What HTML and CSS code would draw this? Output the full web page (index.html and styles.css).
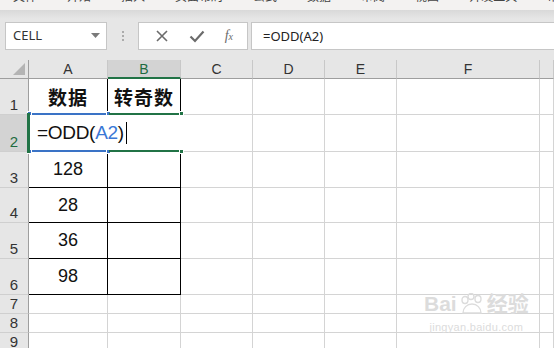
FILE: index.html
```html
<!DOCTYPE html>
<html lang="zh-CN">
<head>
    <meta charset="UTF-8">
    <title>ODD</title>
    <link rel="stylesheet" href="styles.css">
</head>
<body>
    <div class="menu">
        <span>文件</span><span>开始</span><span>插入</span><span>页面布局</span><span>公式</span>
        <span>数据</span><span>审阅</span><span>视图</span><span>开发工具</span><span>帮助</span>
    </div>

    <div class="toolbar">
        <div class="namebox">
            <span>CELL</span>
            <svg width="9" height="5" viewBox="0 0 9 5"><path d="M0 0h9L4.5 5z" fill="#7a7a7a"/></svg>
        </div>
        <div class="grip"><i></i><i></i><i></i></div>
        <div class="fbtns">
            <svg width="14" height="14" viewBox="0 0 14 14"><path d="M2 2l10 10M12 2L2 12" stroke="#6b6b6b" stroke-width="1.6"/></svg>
            <svg width="16" height="14" viewBox="0 0 16 14"><path d="M1.5 7.5l4.5 4.5L14.5 2.5" stroke="#6b6b6b" stroke-width="2.2" fill="none"/></svg>
            <span class="fx">f<small>x</small></span>
        </div>
        <div class="formula">=ODD(A2)</div>
    </div>

    <div class="sheet">
        <!-- header row -->
        <div class="corner"><svg width="12" height="12" viewBox="0 0 12 12"><path d="M12 0v12H0z" fill="#b4b4b4"/></svg></div>
        <div class="colhead">A</div>
        <div class="colhead active">B</div>
        <div class="colhead">C</div>
        <div class="colhead">D</div>
        <div class="colhead">E</div>
        <div class="colhead">F</div>
        <div class="colhead last"></div>

        <!-- row 1 -->
        <div class="rowhead">1</div>
        <div class="cell t bold">数据</div>
        <div class="cell t bold">转奇数</div>
        <div class="cell"></div><div class="cell"></div><div class="cell"></div><div class="cell"></div><div class="cell"></div>

        <!-- row 2 -->
        <div class="rowhead active">2</div>
        <div class="cell edit">=ODD(<span class="ref">A2</span>)<span class="caret"></span></div>
        <div class="cell"></div><div class="cell"></div><div class="cell"></div><div class="cell"></div><div class="cell"></div>

        <!-- row 3 -->
        <div class="rowhead">3</div>
        <div class="cell t">128</div>
        <div class="cell t"></div>
        <div class="cell"></div><div class="cell"></div><div class="cell"></div><div class="cell"></div><div class="cell"></div>

        <!-- row 4 -->
        <div class="rowhead">4</div>
        <div class="cell t">28</div>
        <div class="cell t"></div>
        <div class="cell"></div><div class="cell"></div><div class="cell"></div><div class="cell"></div><div class="cell"></div>

        <!-- row 5 -->
        <div class="rowhead">5</div>
        <div class="cell t">36</div>
        <div class="cell t"></div>
        <div class="cell"></div><div class="cell"></div><div class="cell"></div><div class="cell"></div><div class="cell"></div>

        <!-- row 6 -->
        <div class="rowhead">6</div>
        <div class="cell t">98</div>
        <div class="cell t"></div>
        <div class="cell"></div><div class="cell"></div><div class="cell"></div><div class="cell"></div><div class="cell"></div>

        <!-- rows 7-9 -->
        <div class="rowhead">7</div>
        <div class="cell"></div><div class="cell"></div><div class="cell"></div><div class="cell"></div><div class="cell"></div><div class="cell"></div><div class="cell"></div>
        <div class="rowhead">8</div>
        <div class="cell"></div><div class="cell"></div><div class="cell"></div><div class="cell"></div><div class="cell"></div><div class="cell"></div><div class="cell"></div>
        <div class="rowhead">9</div>
        <div class="cell"></div><div class="cell"></div><div class="cell"></div><div class="cell"></div><div class="cell"></div><div class="cell"></div><div class="cell"></div>

        <!-- selection overlays -->
        <div class="ref-box">
            <i class="h tl"></i><i class="h tr"></i><i class="h bl"></i><i class="h br"></i>
        </div>
        <div class="active-box">
            <i class="g tr"></i><i class="g br"></i>
        </div>
        <div class="active-left"></div>

        <div class="watermark">
            <div class="wm-logo">Bai<svg width="26" height="22" viewBox="0 0 26 22"><g fill="none" stroke="#dcdcdc" stroke-width="1.4"><ellipse cx="6" cy="7" rx="3" ry="3.5"/><ellipse cx="12" cy="3.5" rx="3" ry="3"/><ellipse cx="19" cy="6" rx="3" ry="3.5"/><path d="M4 20c0-5 4-9 9-9s9 4 9 9z"/></g></svg>经验</div>
            <div class="wm-url">jingyan.baidu.com</div>
        </div>
    </div>
</body>
</html>
```

FILE: styles.css
```css
* {
    margin: 0;
    padding: 0;
    box-sizing: border-box;
}
body {
    width: 554px;
    height: 348px;
    overflow: hidden;
    background-color: #e6e6e6;
    font-family: 'Liberation Sans', 'Noto Sans CJK SC', sans-serif;
    color: #222;
}
.menu {
    height: 10px;
    overflow: hidden;
    background-color: #f3f2f1;
    display: flex;
    gap: 30px;
    padding-left: 13px;
}
.menu span {
    font-size: 12px;
    line-height: 12px;
    margin-top: -9px;
    color: #444;
    white-space: nowrap;
}
.toolbar {
    height: 50px;
    display: flex;
    align-items: flex-start;
    padding-top: 12px;
    background: linear-gradient(#d9d9d9, #e6e6e6 9px);
}
.namebox {
    width: 102px;
    height: 28px;
    margin-left: 5px;
    background-color: #fff;
    border: 1px solid #c6c6c6;
    display: flex;
    align-items: center;
    justify-content: space-between;
    padding: 0 6px 2px 7px;
    font-family: 'Noto Sans', sans-serif;
    font-size: 13px;
    color: #333;
}
.grip {
    width: 31px;
    height: 28px;
    display: flex;
    flex-direction: column;
    align-items: center;
    justify-content: center;
    gap: 2px;
}
.grip i {
    width: 2px;
    height: 2px;
    background-color: #ababab;
}
.fbtns {
    width: 110px;
    height: 28px;
    background-color: #fff;
    border: 1px solid #c6c6c6;
    display: flex;
    align-items: center;
    justify-content: space-around;
    padding: 0 4px 0 6px;
}
.fx {
    font-family: 'Liberation Serif', serif;
    font-style: italic;
    font-size: 14px;
    color: #6b6b6b;
}
.fx small {
    font-size: 10px;
}
.formula {
    flex: 1;
    height: 28px;
    margin-left: 3px;
    background-color: #fff;
    border: 1px solid #c6c6c6;
    border-right: none;
    padding: 4px 11px;
    font-family: 'Noto Sans', sans-serif;
    font-size: 13px;
    color: #222;
}

.sheet {
    position: relative;
    display: grid;
    grid-template-columns: 29px 79px 73px 72px 72px 72px 143px 1fr;
    grid-template-rows: 19px 36px 37px 36px 35px 36px 36px 19px 19px 19px;
    background-color: #fff;
}
.corner {
    background-color: #e6e6e6;
    border-right: 1px solid #9e9e9e;
    border-bottom: 1px solid #9e9e9e;
    display: flex;
    align-items: flex-end;
    justify-content: flex-end;
    padding: 0 3px 3px 0;
}
.colhead {
    background-color: #e6e6e6;
    border-right: 1px solid #c8c8c8;
    border-bottom: 1px solid #9e9e9e;
    text-align: center;
    font-size: 14px;
    line-height: 18px;
    color: #333;
}
.colhead.active {
    background-color: #d3d3d3;
    color: #1f6b40;
    border-bottom: 2px solid #217346;
}
.rowhead {
    background-color: #e6e6e6;
    border-right: 1px solid #9e9e9e;
    border-bottom: 1px solid #cfcfcf;
    display: flex;
    align-items: flex-end;
    justify-content: center;
    padding-bottom: 1px;
    font-size: 15px;
    line-height: 17px;
    color: #333;
}
.rowhead.active {
    background-color: #d3d3d3;
    color: #1f6b40;
}
.cell {
    border-right: 1px solid #d4d4d4;
    border-bottom: 1px solid #d4d4d4;
    display: flex;
    align-items: center;
    justify-content: center;
    font-size: 18px;
    color: #111;
}
.cell.t {
    border-right-color: #000;
    border-bottom-color: #000;
}
.cell.bold {
    font-family: 'Noto Sans CJK SC', sans-serif;
    font-weight: bold;
    font-size: 19px;
    letter-spacing: 1px;
}
.cell.edit {
    grid-column: span 2;
    justify-content: flex-start;
    padding-left: 8px;
    border-right-color: #fff;
    border-bottom-color: #000;
    font-size: 19px;
    letter-spacing: -0.3px;
}
.ref {
    color: #3a78d6;
}
.caret {
    display: inline-block;
    width: 1px;
    height: 22px;
    margin-left: 2px;
    background-color: #000;
}

.ref-box {
    position: absolute;
    left: 28px;
    top: 53px;
    width: 81px;
    height: 39px;
    border-top: 2px solid #3a73c6;
    border-bottom: 2px solid #3a73c6;
}
.h {
    position: absolute;
    width: 5px;
    height: 5px;
    background-color: #3a73c6;
    border: 1px solid #fff;
}
.tl { left: -1px; top: -4px; }
.tr { right: -2px; top: -4px; }
.bl { left: -1px; bottom: -4px; }
.br { right: -2px; bottom: -4px; }
.active-box {
    position: absolute;
    left: 109px;
    top: 53px;
    width: 72px;
    height: 39px;
    border-top: 2px solid #217346;
    border-bottom: 2px solid #217346;
}
.g {
    position: absolute;
    width: 5px;
    height: 5px;
    background-color: #217346;
    border: 1px solid #fff;
}
.active-box .tr { right: -3px; top: -4px; }
.active-box .br { right: -3px; bottom: -4px; }
.active-left {
    position: absolute;
    left: 27px;
    top: 53px;
    width: 3px;
    height: 40px;
    background-color: #217346;
}

.watermark {
    position: absolute;
    left: 424px;
    top: 233px;
    white-space: nowrap;
    color: #dcdcdc;
    text-align: center;
}
.wm-logo {
    display: flex;
    align-items: flex-end;
    font-family: 'Liberation Sans', 'Noto Sans CJK SC', sans-serif;
    font-size: 21px;
    font-weight: bold;
    line-height: 22px;
}
.wm-logo svg {
    margin: 0 2px;
}
.wm-url {
    font-size: 11px;
    margin-top: 6px;
    letter-spacing: 0.3px;
}
```
